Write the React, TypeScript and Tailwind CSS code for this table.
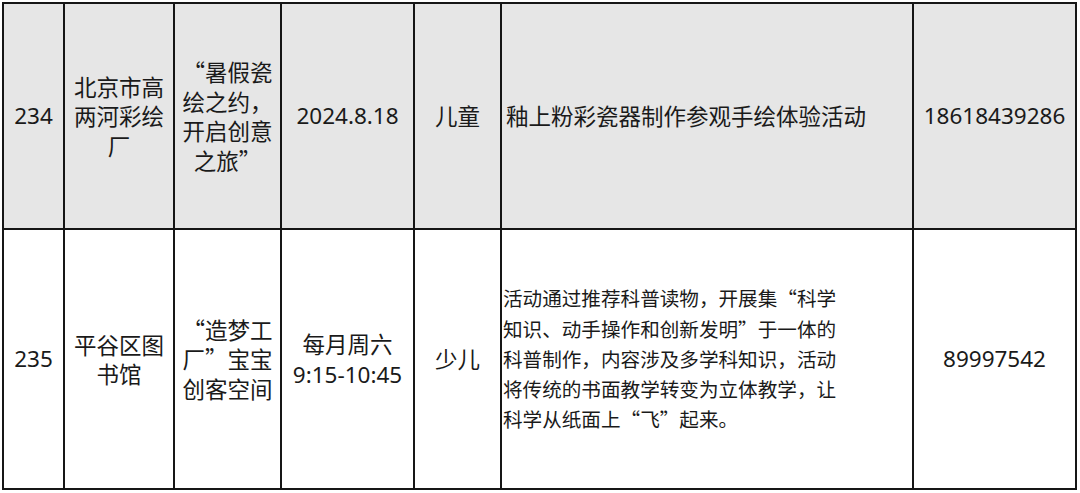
import React from "react";

const cjk = "font-['Noto_Sans_CJK_SC','Noto_Sans',sans-serif]";
const latin = "font-['Noto_Sans','Noto_Sans_CJK_SC',sans-serif]";

type Row = {
  no: string;
  org: React.ReactNode;
  title: React.ReactNode;
  time: React.ReactNode;
  age: string;
  desc: React.ReactNode;
  descClass: string;
  phone: string;
  bg: string;
};

const rows: Row[] = [
  {
    no: "234",
    org: (
      <>
        北京市高
        <br />
        两河彩绘
        <br />厂
      </>
    ),
    title: (
      <>
        “暑假瓷
        <br />
        绘之约，
        <br />
        开启创意
        <br />
        之旅”
      </>
    ),
    time: "2024.8.18",
    age: "儿童",
    desc: "釉上粉彩瓷器制作参观手绘体验活动",
    descClass: "pl-1 text-[22.5px] leading-[29.5px]",
    phone: "18618439286",
    bg: "bg-[#e6e6e6]",
  },
  {
    no: "235",
    org: (
      <>
        平谷区图
        <br />
        书馆
      </>
    ),
    title: (
      <>
        “造梦工
        <br />
        厂”宝宝
        <br />
        创客空间
      </>
    ),
    time: (
      <>
        <span className={cjk}>每月周六</span>
        <br />
        9:15-10:45
      </>
    ),
    age: "少儿",
    desc: (
      <>
        活动通过推荐科普读物，开展集“科学
        <br />
        知识、动手操作和创新发明”于一体的
        <br />
        科普制作，内容涉及多学科知识，活动
        <br />
        将传统的书面教学转变为立体教学，让
        <br />
        科学从纸面上“飞”起来。
      </>
    ),
    descClass: "pl-[1px] text-[19.6px] leading-[30.3px]",
    phone: "89997542",
    bg: "bg-white",
  },
];

function Cell({
  children,
  className = "",
  bg,
}: {
  children: React.ReactNode;
  className?: string;
  bg: string;
}) {
  return (
    <div className={`flex items-center justify-center text-center ${bg} ${className}`}>
      <div>{children}</div>
    </div>
  );
}

export default function App() {
  return (
    <div className="w-[1080px] h-[493px] bg-white pl-[2px] pt-[2px] text-[#1a1a1a]">
      <div className="grid w-[1075px] grid-cols-[59px_108px_105px_131px_85px_410px_161px] grid-rows-[224px_258px] gap-[2px] bg-[#161616] p-[2px] text-[22.5px] leading-[29.5px]">
        {rows.map((r) => (
          <React.Fragment key={r.no}>
            <Cell bg={r.bg} className={latin}>
              {r.no}
            </Cell>
            <Cell bg={r.bg} className={cjk}>
              {r.org}
            </Cell>
            <Cell bg={r.bg} className={cjk}>
              {r.title}
            </Cell>
            <Cell bg={r.bg} className={latin}>
              {r.time}
            </Cell>
            <Cell bg={r.bg} className={cjk}>
              {r.age}
            </Cell>
            <div className={`flex items-center text-left ${r.bg} ${cjk} ${r.descClass}`}>
              <div>{r.desc}</div>
            </div>
            <Cell bg={r.bg} className={latin}>
              {r.phone}
            </Cell>
          </React.Fragment>
        ))}
      </div>
    </div>
  );
}
